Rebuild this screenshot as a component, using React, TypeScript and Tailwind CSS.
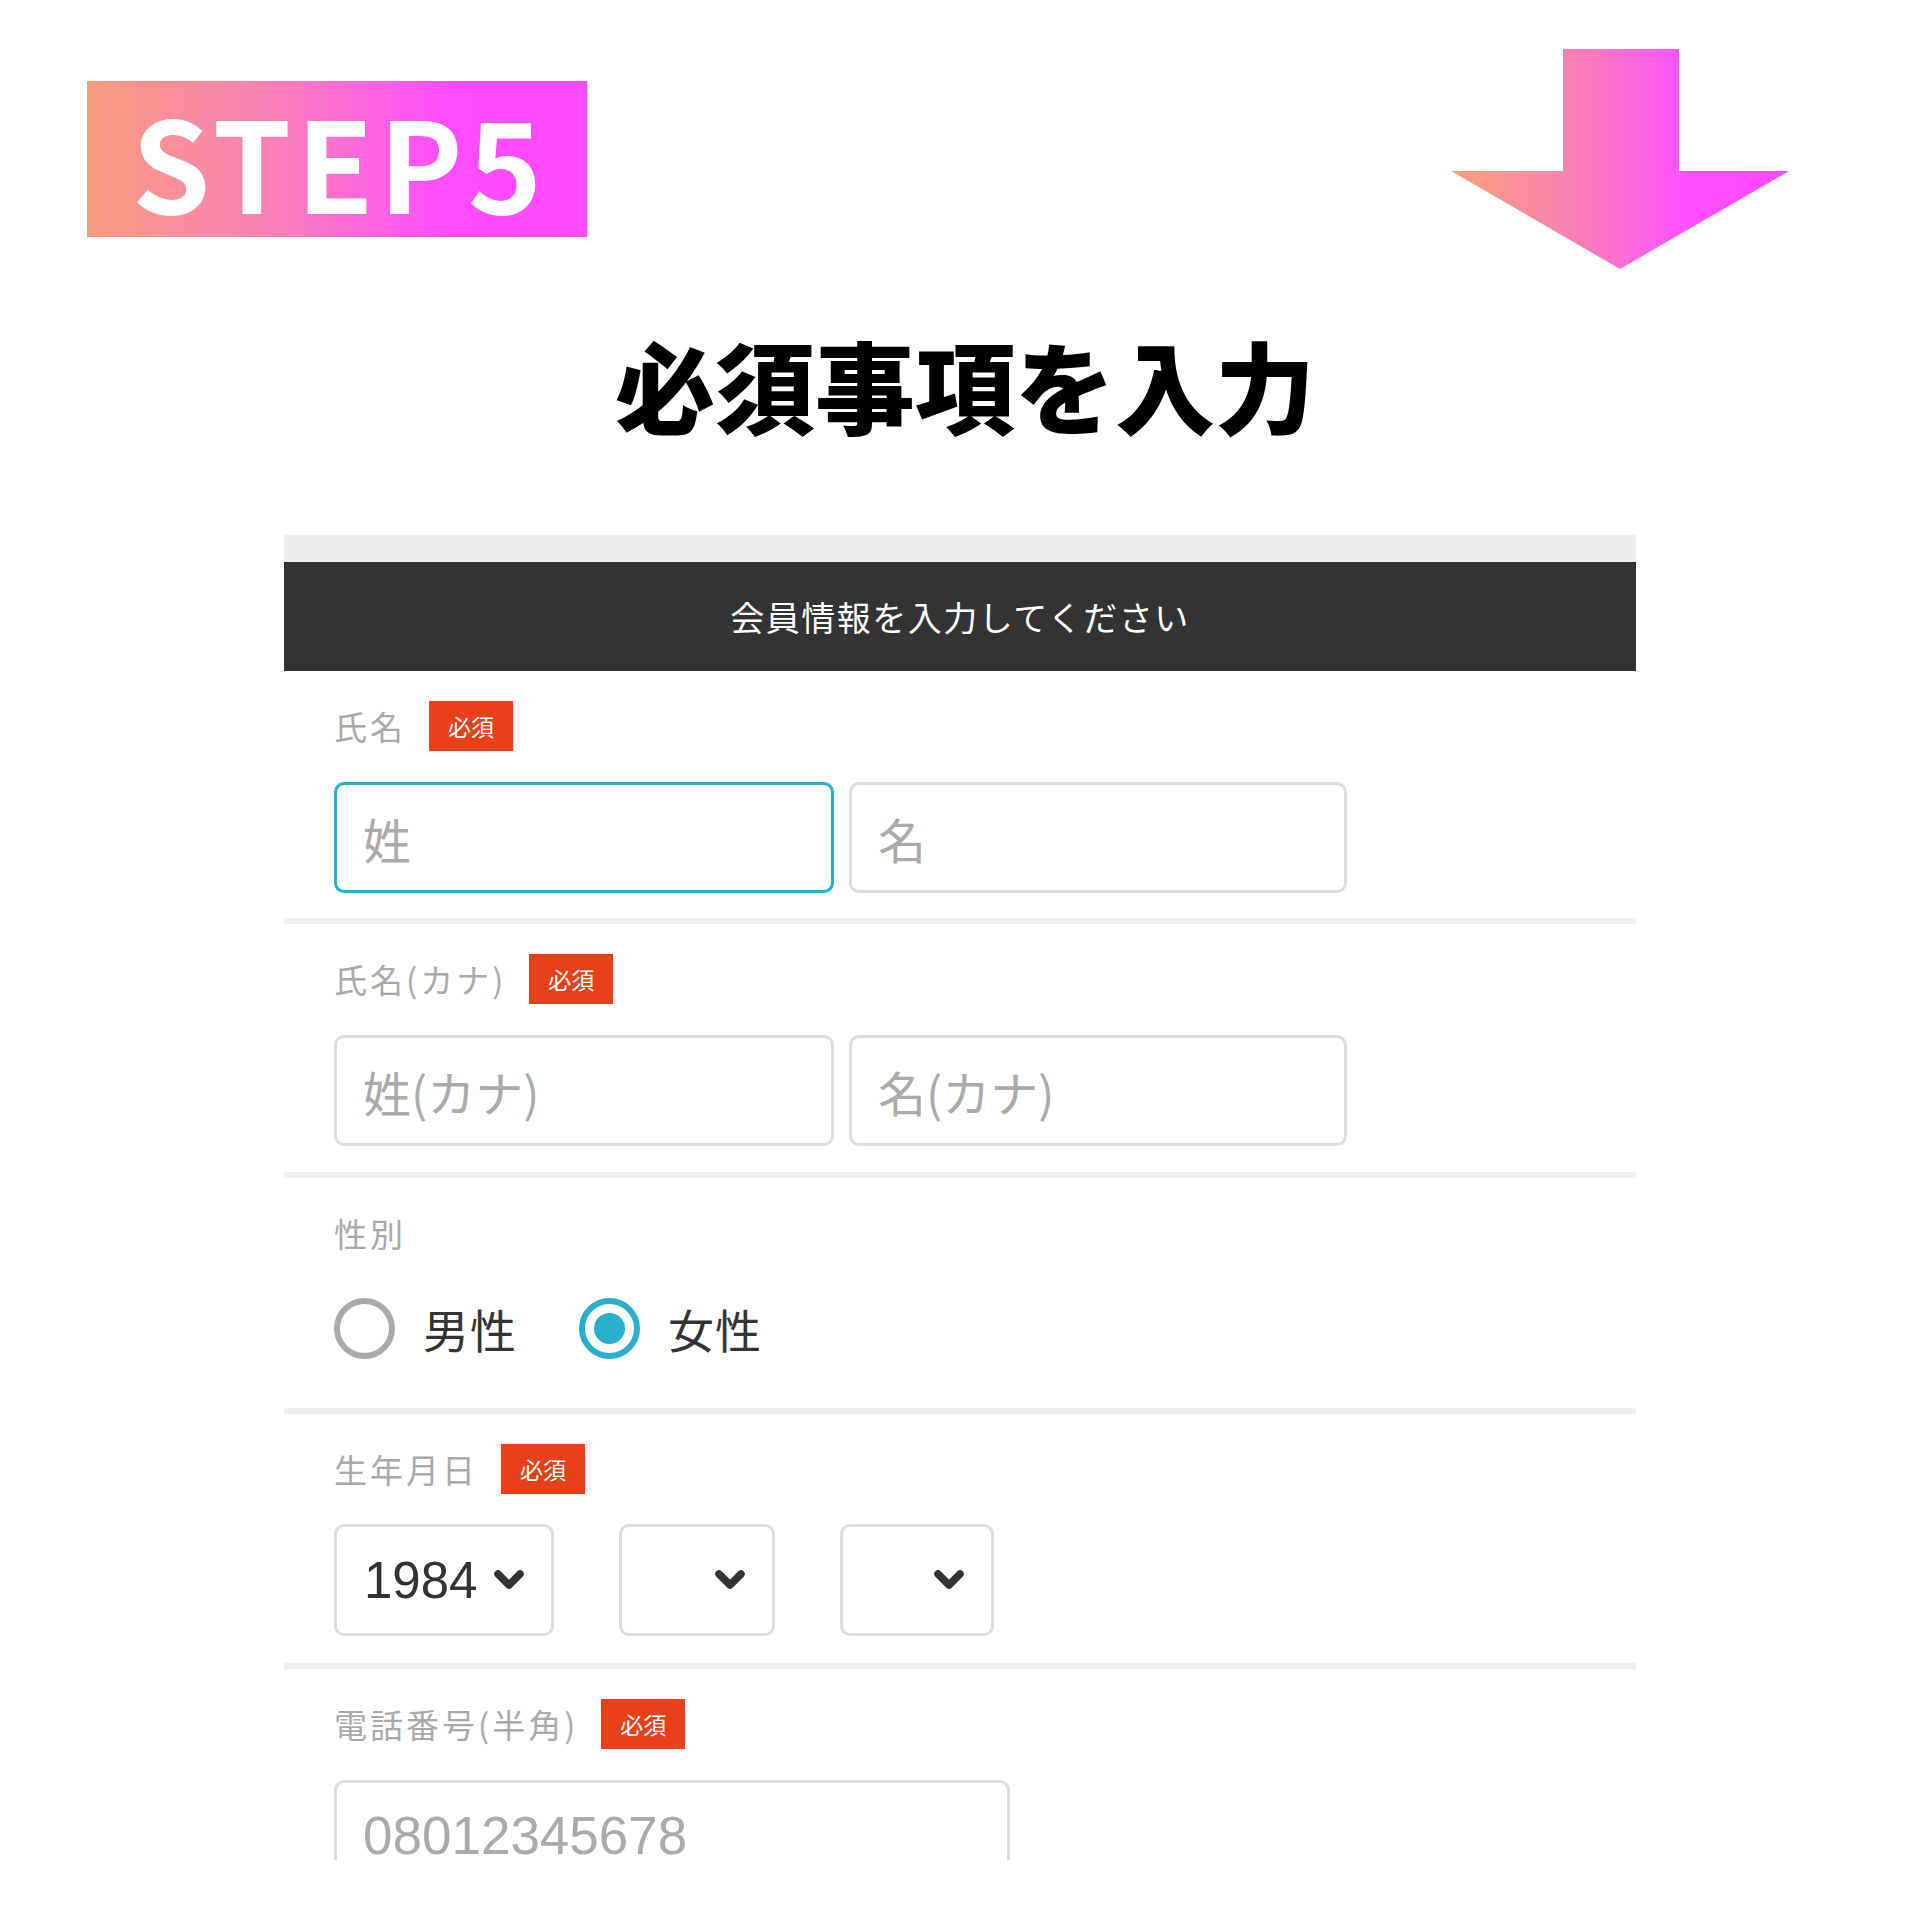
const labelStyle = "text-[33px] leading-none tracking-[3px] text-[#a9a9a9]";
const inputStyle =
  "h-[111px] rounded-[10px] border-[3px] bg-white pl-[26px] text-[48px] text-[#333] outline-none placeholder:text-[#aaaaaa]";
const selectStyle =
  "flex h-[112px] items-center rounded-[10px] border-[3px] border-[#dddddd] bg-white pr-[26px]";

function Badge() {
  return (
    <span className="ml-[23px] flex h-[50px] w-[84px] items-center justify-center bg-[#e8411a] text-[23px] text-white">
      必須
    </span>
  );
}

function Chevron() {
  return (
    <svg width="32" height="22" viewBox="0 0 32 22" className="shrink-0">
      <path
        d="M5 5 L16 16 L27 5"
        fill="none"
        stroke="#333"
        strokeWidth="7.5"
        strokeLinecap="round"
        strokeLinejoin="round"
      />
    </svg>
  );
}

function Radio({ checked, label }: { checked: boolean; label: string }) {
  return (
    <div className="flex items-center gap-[28px]">
      {checked ? (
        <span className="flex h-[61px] w-[61px] items-center justify-center rounded-full border-[6px] border-[#29aecb]">
          <span className="h-[31px] w-[31px] rounded-full bg-[#29aecb]" />
        </span>
      ) : (
        <span className="h-[61px] w-[61px] rounded-full border-[6px] border-[#aaaaaa]" />
      )}
      <span className="text-[46px] leading-none tracking-[1px] text-[#333]">{label}</span>
    </div>
  );
}

function Divider() {
  return <div className="h-[6px] bg-[#eeeeee]" />;
}

export default function App() {
  return (
    <div className="h-[1920px] w-[1920px] bg-white font-['Noto_Sans_CJK_JP',sans-serif]">
      <div className="h-[1860px] overflow-hidden">
        {/* top: step + arrow */}
        <div className="flex items-start justify-between pl-[87px] pr-[131px] pt-[49px]">
          <div className="mt-[32px] flex h-[156px] w-[500px] items-center justify-center bg-[linear-gradient(to_right,#f69b7d_0%,#fa7dbd_40%,#ff4dff_72%,#ff4aff_100%)]">
            <span className="pl-[5px] text-[126px] font-bold leading-none tracking-[5px] text-white">
              STEP5
            </span>
          </div>
          <svg width="338" height="220" viewBox="0 0 338 220">
            <defs>
              <linearGradient id="arrowGrad" x1="0" y1="0" x2="1" y2="0">
                <stop offset="0" stopColor="#f6a07a" />
                <stop offset="0.4" stopColor="#f97cbb" />
                <stop offset="0.7" stopColor="#ff4fff" />
                <stop offset="1" stopColor="#ff4aff" />
              </linearGradient>
            </defs>
            <polygon
              points="112,0 228,0 228,122 338,122 169,220 0,122 112,122"
              fill="url(#arrowGrad)"
            />
          </svg>
        </div>

        <h1 className="mt-[65px] pl-[10px] text-center text-[100px] font-black leading-none text-black">
          必須事項を入力
        </h1>

        {/* form */}
        <div className="mx-auto mt-[101px] w-[1352px]">
          <div className="h-[27px] bg-[#eeeeee]" />
          <div className="flex h-[109px] items-center justify-center bg-[#333333] text-[34px] tracking-[1.5px] text-white">
            会員情報を入力してください
          </div>

          <div className="px-[50px] pb-[25px] pt-[30px]">
            <div className="flex h-[50px] items-center">
              <span className={labelStyle}>氏名</span>
              <Badge />
            </div>
            <div className="mt-[31px] flex gap-[15px]">
              <input
                readOnly
                placeholder="姓"
                className={`${inputStyle} w-[500px] border-[#29aecb]`}
              />
              <input
                readOnly
                placeholder="名"
                className={`${inputStyle} w-[498px] border-[#dddddd]`}
              />
            </div>
          </div>
          <Divider />

          <div className="px-[50px] pb-[26px] pt-[30px]">
            <div className="flex h-[50px] items-center">
              <span className={labelStyle}>氏名(カナ)</span>
              <Badge />
            </div>
            <div className="mt-[31px] flex gap-[15px]">
              <input
                readOnly
                placeholder="姓(カナ)"
                className={`${inputStyle} w-[500px] border-[#dddddd]`}
              />
              <input
                readOnly
                placeholder="名(カナ)"
                className={`${inputStyle} w-[498px] border-[#dddddd]`}
              />
            </div>
          </div>
          <Divider />

          <div className="px-[50px] pb-[50px] pt-[30px]">
            <div className="flex h-[50px] items-center">
              <span className={labelStyle}>性別</span>
            </div>
            <div className="mt-[40px] flex h-[60px] items-center gap-[62px]">
              <Radio checked={false} label="男性" />
              <Radio checked={true} label="女性" />
            </div>
          </div>
          <Divider />

          <div className="px-[50px] pb-[27px] pt-[30px]">
            <div className="flex h-[50px] items-center">
              <span className={labelStyle}>生年月日</span>
              <Badge />
            </div>
            <div className="mt-[30px] flex gap-[65px]">
              <div className={`${selectStyle} w-[220px] justify-between pl-[27px]`}>
                <span className="font-['Liberation_Sans',sans-serif] text-[51px] leading-none text-[#333]">
                  1984
                </span>
                <Chevron />
              </div>
              <div className={`${selectStyle} w-[156px] justify-end`}>
                <Chevron />
              </div>
              <div className={`${selectStyle} w-[154px] justify-end`}>
                <Chevron />
              </div>
            </div>
          </div>
          <Divider />

          <div className="px-[50px] pt-[30px]">
            <div className="flex h-[50px] items-center">
              <span className={labelStyle}>電話番号(半角)</span>
              <Badge />
            </div>
            <div className="mt-[31px]">
              <input
                readOnly
                placeholder="08012345678"
                className={`${inputStyle} w-[676px] border-[#dddddd] font-['Liberation_Sans',sans-serif] text-[53px]`}
              />
            </div>
          </div>
        </div>
      </div>
    </div>
  );
}
